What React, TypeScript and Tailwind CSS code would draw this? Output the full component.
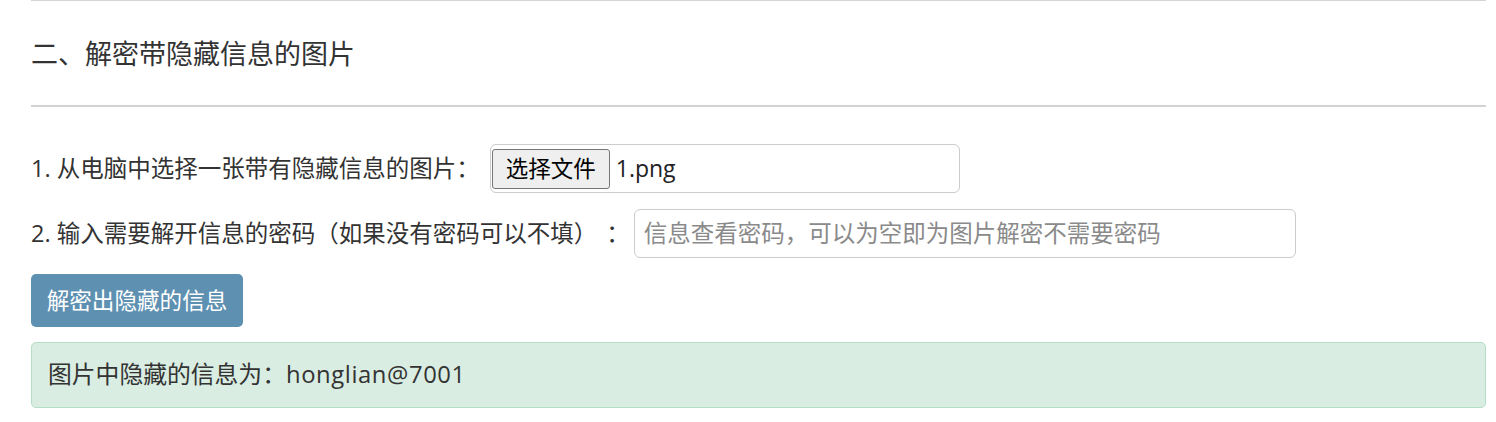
import React from "react";

export default function App() {
  return (
    <div
      className="pl-[31px] pr-[10px] text-[#333333] bg-white"
      style={{ fontFamily: '"Open Sans", "Noto Sans CJK SC", sans-serif' }}
    >
      <div className="h-px bg-[#d4d4d4]" />
      <div className="h-[104px] flex items-center">
        <h3 className="text-[27px] leading-none font-normal text-[#333]">二、解密带隐藏信息的图片</h3>
      </div>
      <div className="h-[2px] bg-[#d2d2d2]" />

      <div className="mt-[37px] flex items-center h-[49px] text-[23.5px]">
        <span className="whitespace-nowrap">1. 从电脑中选择一张带有隐藏信息的图片：</span>
        <div className="ml-[10px] w-[470px] h-[49px] border border-[#cccccc] rounded-[6px] flex items-center pl-[1px]">
          <span className="h-[40px] px-[13px] flex items-center bg-[#efefef] border border-[#767676] rounded-[3px] text-[22.5px] text-black">
            选择文件
          </span>
          <span className="ml-[6px] text-[23px] text-[#222]">1.png</span>
        </div>
      </div>

      <div className="mt-[16px] flex items-center h-[49px] text-[23.5px]">
        <span className="whitespace-nowrap">2. 输入需要解开信息的密码（如果没有密码可以不填）</span>
        <span className="ml-[9px]">：</span>
        <div className="ml-[4px] w-[662px] h-[49px] border border-[#cccccc] rounded-[6px] flex items-center pl-[9px]">
          <span className="text-[#8a8a8a]">信息查看密码，可以为空即为图片解密不需要密码</span>
        </div>
      </div>

      <div className="mt-[16px]">
        <button className="w-[212px] h-[53px] rounded-[5px] bg-[#5e90b1] text-white text-[22.6px] flex items-center justify-center">
          解密出隐藏的信息
        </button>
      </div>

      <div className="mt-[15px] h-[66px] bg-[#daede2] border border-[#b4dfc6] rounded-[5px] flex items-center pl-[16px] text-[23.8px] text-[#333]">
        <span>图片中隐藏的信息为：</span>
        <span className="tracking-[0.6px]">honglian@7001</span>
      </div>
    </div>
  );
}
